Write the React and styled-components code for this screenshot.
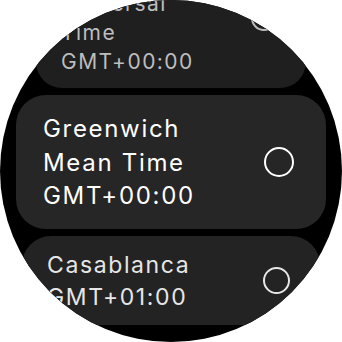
import React from 'react';
import styled, { createGlobalStyle } from 'styled-components';

const GlobalStyle = createGlobalStyle`
  html, body {
    margin: 0;
    padding: 0;
    background: #ffffff;
  }
  body {
    font-family: Inter, Roboto, "Noto Sans", sans-serif;
  }
`;

const zones = [
  {
    title: 'Coordinated Universal Time',
    offset: 'GMT+00:00',
    inset: 36,
    font: 21,
    line: 29,
    padY: 12.7,
    padL: 25,
    padR: 29,
    radio: 26,
    maxText: 150,
    bg: '#1f1f1f',
    color: '#bdbdbd',
  },
  {
    title: 'Greenwich Mean Time',
    offset: 'GMT+00:00',
    inset: 16,
    font: 24,
    line: 33.5,
    padY: 16.75,
    padL: 27,
    padR: 32,
    radio: 30,
    maxText: 180,
    bg: '#262626',
    color: '#ffffff',
  },
  {
    title: 'Casablanca',
    offset: 'GMT+01:00',
    inset: 22,
    font: 23,
    line: 32,
    padY: 12.5,
    padL: 25,
    padR: 30,
    radio: 27,
    maxText: 175,
    bg: '#232323',
    color: '#e6e6e6',
  },
];

const App = () => {
  return (
    <>
      <GlobalStyle />
      <Screen>
        <List>
          {zones.map((z) => (
            <Card key={z.title} $z={z}>
              <Label $z={z}>
                <div>{z.title}</div>
                <div>{z.offset}</div>
              </Label>
              <Radio $z={z} />
            </Card>
          ))}
        </List>
      </Screen>
    </>
  );
};

const Screen = styled.div`
  width: 342px;
  height: 342px;
  border-radius: 50%;
  overflow: hidden;
  background: #000000;
`;

const List = styled.div`
  display: flex;
  flex-direction: column;
  gap: 7px;
  margin-top: -53px;
`;

const Card = styled.div`
  display: flex;
  align-items: center;
  justify-content: space-between;
  margin: 0 ${(p) => p.$z.inset}px;
  padding: ${(p) => p.$z.padY}px ${(p) => p.$z.padR}px ${(p) => p.$z.padY}px
    ${(p) => p.$z.padL}px;
  background: ${(p) => p.$z.bg};
  border-radius: ${(p) => Math.round(p.$z.font * 1.25)}px;
`;

const Label = styled.div`
  max-width: ${(p) => p.$z.maxText}px;
  font-size: ${(p) => p.$z.font}px;
  line-height: ${(p) => p.$z.line}px;
  color: ${(p) => p.$z.color};
  letter-spacing: ${(p) => (p.$z.font * 0.07).toFixed(2)}px;
`;

const Radio = styled.span`
  flex: none;
  box-sizing: border-box;
  width: ${(p) => p.$z.radio}px;
  height: ${(p) => p.$z.radio}px;
  border: 2.5px solid ${(p) => p.$z.color};
  border-radius: 50%;
`;

export default App;
